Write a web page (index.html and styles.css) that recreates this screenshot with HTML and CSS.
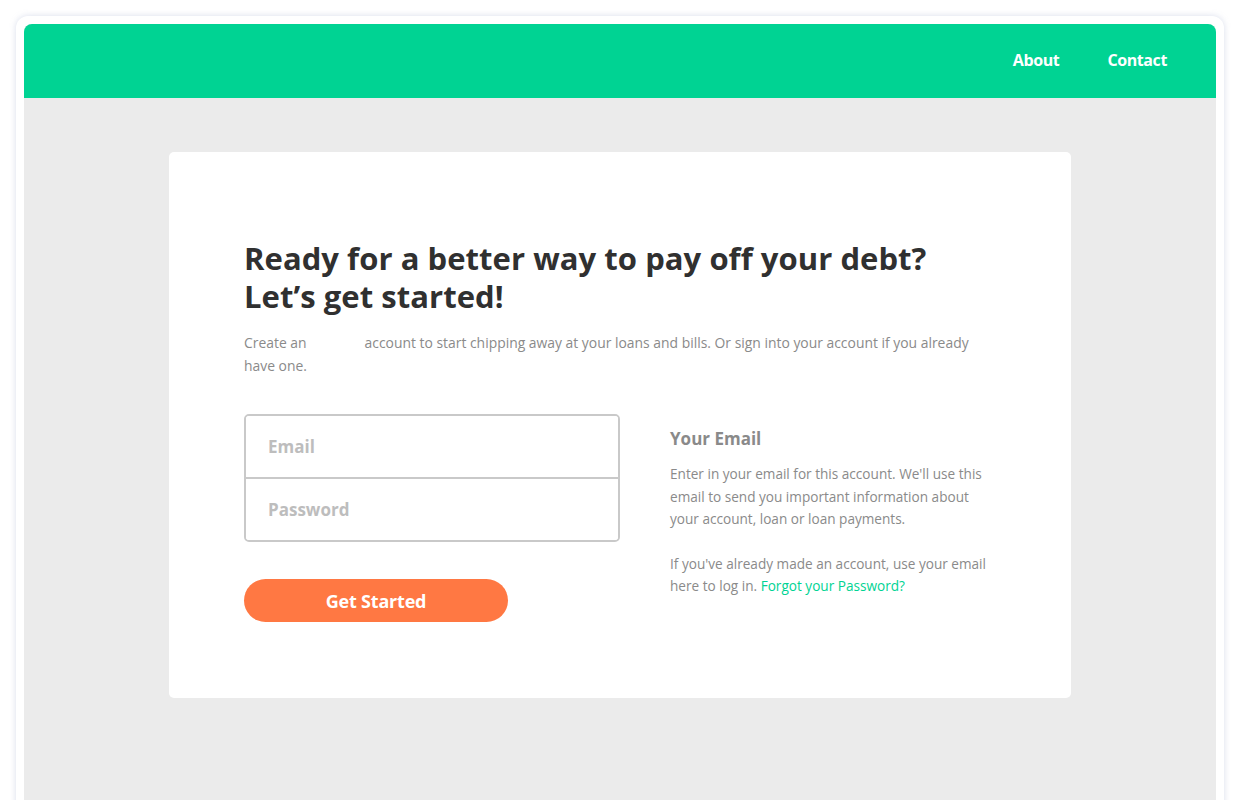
FILE: index.html
```html
<!DOCTYPE html>
<html lang="en">
<head>
<meta charset="utf-8">
<title>Get Started</title>
<link rel="stylesheet" href="styles.css">
</head>
<body>
<div class="frame">
  <div class="app">
    <header class="topbar">
      <nav class="nav">
        <a class="nav-link" href="#">About</a>
        <a class="nav-link" href="#">Contact</a>
      </nav>
    </header>
    <main class="main">
      <section class="card">
        <h1 class="title">Ready for a better way to pay off your debt?<br>Let’s get started!</h1>
        <p class="intro">Create an<span class="brand"></span>account to start chipping away at your loans and bills. Or sign into your account if you already have one.</p>
        <div class="columns">
          <div class="form-col">
            <div class="fields">
              <input class="field" type="email" placeholder="Email">
              <input class="field field-last" type="password" placeholder="Password">
            </div>
            <button class="btn" type="button">Get Started</button>
          </div>
          <div class="help-col">
            <h2 class="help-title">Your Email</h2>
            <p class="help-text">Enter in your email for this account. We'll use this email to send you important information about your account, loan or loan payments.</p>
            <p class="help-text">If you've already made an account, use your email here to log in. <a class="link" href="#">Forgot your Password?</a></p>
          </div>
        </div>
      </section>
    </main>
  </div>
</div>
</body>
</html>
```
FILE: styles.css
```css
* { box-sizing: border-box; }
html, body { margin: 0; padding: 0; background: #ffffff; }
body {
  font-family: "Open Sans", "Noto Sans", "Liberation Sans", sans-serif;
  overflow: hidden;
  height: 800px;
}
.frame {
  margin: 16px 16px 0 16px;
  padding: 8px 8px 0 8px;
  background: #ffffff;
  border-radius: 12px 12px 0 0;
  box-shadow: 0 0 6px rgba(150, 160, 200, 0.35);
  height: 820px;
}
.app {
  background: #ebebeb;
  border-radius: 8px 8px 0 0;
  height: 100%;
  overflow: hidden;
}
.topbar {
  height: 74px;
  background: #00d393;
  display: flex;
  align-items: center;
  justify-content: flex-end;
  padding-right: 49px;
  padding-bottom: 2px;
}
.nav { display: flex; gap: 48px; }
.nav-link {
  color: #ffffff;
  text-decoration: none;
  font-weight: 700;
  font-size: 16px;
  letter-spacing: -0.4px;
}
.main { padding-top: 54px; display: flex; justify-content: center; }
.card {
  width: 902px;
  height: 546px;
  background: #ffffff;
  border-radius: 5px;
  padding: 87px 75px 0 75px;
}
.title {
  margin: 0;
  font-size: 31px;
  line-height: 38px;
  font-weight: 700;
  color: #303030;
  letter-spacing: 0.05px;
}
.intro {
  margin: 17px 0 0 0;
  font-size: 13.9px;
  line-height: 22.5px;
  color: #8a8a8a;
}
.brand { display: inline-block; width: 58px; }
.columns { display: flex; gap: 50px; margin-top: 37px; }
.form-col { width: 376px; flex: none; }
.fields {
  border: 2px solid #c9c9c9;
  border-radius: 5px;
  display: flex;
  flex-direction: column;
  overflow: hidden;
}
.field {
  border: 0;
  border-bottom: 2px solid #c9c9c9;
  height: 63px;
  padding: 0 22px;
  font-family: inherit;
  font-size: 17px;
  font-weight: 700;
  color: #444;
  outline: none;
}
.field-last { border-bottom: 0; height: 61px; }
.field::placeholder { color: #bdbdbd; }
.btn {
  margin-top: 37px;
  width: 264px;
  height: 43px;
  border: 0;
  border-radius: 22px;
  background: #ff7843;
  color: #ffffff;
  font-family: inherit;
  font-size: 18px;
  font-weight: 700;
  letter-spacing: -0.2px;
  cursor: pointer;
}
.help-col { width: 330px; flex: none; padding-top: 13px; }
.help-title {
  margin: 0;
  font-size: 17px;
  line-height: 24px;
  font-weight: 700;
  color: #8a8a8a;
}
.help-text {
  margin: 12px 0 0 0;
  font-size: 13.6px;
  line-height: 22.5px;
  color: #8a8a8a;
}
.help-text + .help-text { margin-top: 22px; }
.link { color: #00d393; text-decoration: none; }
```
